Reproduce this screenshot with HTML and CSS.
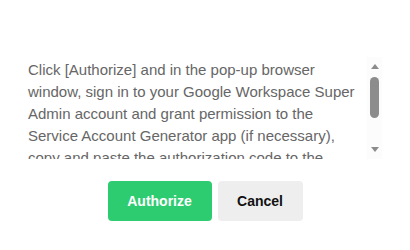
FILE: index.html
```html
<!DOCTYPE html>
<html lang="en">
<head>
<meta charset="UTF-8" />
<title>Authorize</title>
<link rel="stylesheet" href="styles.css">
</head>
<body>
  <div class="dialog">
    <div class="message-box">
      <div class="message">
        Click [Authorize] and in the pop-up browser window, sign in to your Google Workspace Super Admin account and grant permission to the Service Account Generator app (if necessary), copy and paste the authorization code to the corresponding field below and click [Continue].
      </div>
      <div class="scrollbar" aria-hidden="true">
        <span class="arrow arrow-up"></span>
        <span class="thumb"></span>
        <span class="arrow arrow-down"></span>
      </div>
    </div>
    <div class="actions">
      <button class="btn btn-primary">Authorize</button>
      <button class="btn btn-secondary">Cancel</button>
    </div>
  </div>
</body>
</html>
```
FILE: styles.css
```css
body {
  margin: 0;
  background: #ffffff;
  font-family: Arial, "Liberation Sans", sans-serif;
}

.dialog {
  padding-top: 57px;
  display: flex;
  flex-direction: column;
  align-items: center;
}

.message-box {
  align-self: flex-start;
  margin-left: 18px;
  width: 364px;
  height: 102px;
  display: flex;
}

.message {
  flex: 1;
  padding: 2px 12px 0 10px;
  overflow: hidden;
  font-size: 15px;
  line-height: 22px;
  color: #666666;
}

/* fake scrollbar (real one is hidden in the shot) */
.scrollbar {
  width: 15px;
  flex-shrink: 0;
  background: #fcfcfc;
  display: flex;
  flex-direction: column;
  align-items: center;
}
.arrow {
  width: 0;
  height: 0;
  border-left: 4px solid transparent;
  border-right: 4px solid transparent;
}
.arrow-up {
  margin-top: 7px;
  border-bottom: 5px solid #8c8c8c;
}
.arrow-down {
  margin-top: 29px;
  border-top: 5px solid #8c8c8c;
}
.thumb {
  margin-top: 8px;
  width: 9px;
  height: 41px;
  border-radius: 5px;
  background: #8c8c8c;
}

.actions {
  display: flex;
  gap: 6px;
  margin-top: 22px;
}

.btn {
  height: 40px;
  border: none;
  border-radius: 4px;
  font-family: Arial, "Liberation Sans", sans-serif;
  font-size: 14px;
  font-weight: bold;
  cursor: pointer;
}

.btn-primary {
  width: 104px;
  background-color: #2ecc71;
  color: #ffffff;
}

.btn-secondary {
  width: 85px;
  background-color: #eeeeee;
  color: #111111;
}
```
